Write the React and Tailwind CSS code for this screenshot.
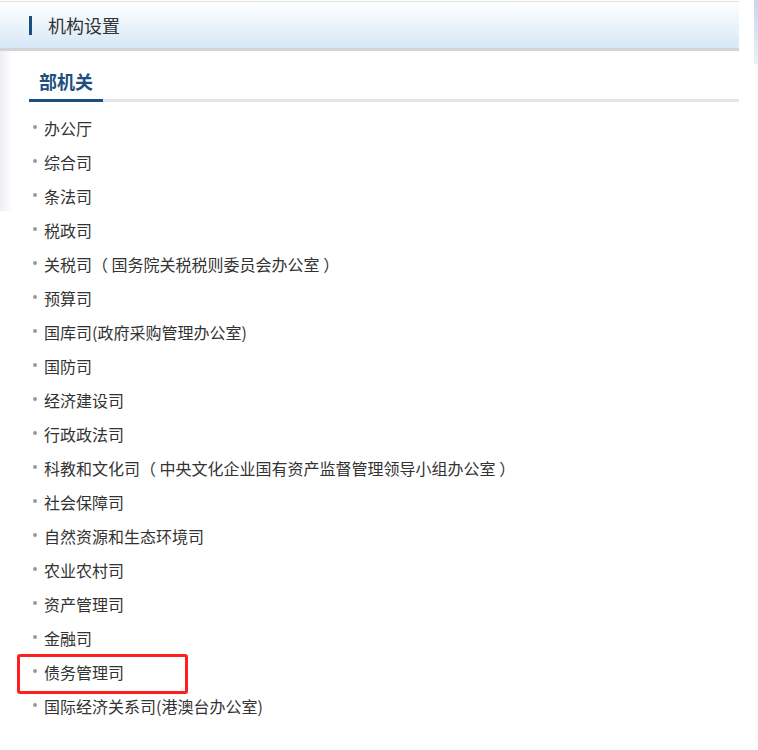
import React from "react";

const items = [
  "办公厅",
  "综合司",
  "条法司",
  "税政司",
  "关税司（ 国务院关税税则委员会办公室 ）",
  "预算司",
  "国库司(政府采购管理办公室)",
  "国防司",
  "经济建设司",
  "行政政法司",
  "科教和文化司（ 中央文化企业国有资产监督管理领导小组办公室 ）",
  "社会保障司",
  "自然资源和生态环境司",
  "农业农村司",
  "资产管理司",
  "金融司",
  "债务管理司",
  "国际经济关系司(港澳台办公室)",
];

export default function App() {
  return (
    <div className="relative w-[758px] h-[750px] bg-white overflow-hidden font-['Microsoft_YaHei','Noto_Sans_CJK_SC',sans-serif] text-[#333]">
      <div className="absolute left-0 top-[51px] w-[12px] h-[160px] bg-gradient-to-r from-[#eceff3] to-white" />
      <div className="absolute right-0 top-0 w-[4px] h-[64px] bg-gradient-to-b from-[#c9d7ec] to-[#eaf0f8]" />
      <div className="relative w-[739px] pt-[1px]">
        <div className="h-[50px] border-t border-[#e2e4e6] border-b-[3px] border-b-[#d3d4d6] bg-gradient-to-b from-white to-[#d7e8f6] flex items-center pl-[29px]">
          <div className="w-[3px] h-[19px] bg-[#1b4d80]" />
          <div className="ml-[16px] text-[18px] leading-[24px] text-[#333]">机构设置</div>
        </div>
        <div className="ml-[29px]">
          <div className="pt-[17px] pb-[5px] pl-[10px] text-[18px] leading-[26px] font-bold text-[#1e4f7e]">
            部机关
          </div>
          <div className="h-[3px] bg-[#e5e5e5]">
            <div className="w-[74px] h-[3px] bg-[#1b4f80]" />
          </div>
          <ul className="mt-[9px]">
            {items.map((t) => (
              <li key={t} className="flex items-center h-[34px] pl-[4px]">
                <span className="w-[4px] h-[4px] rounded-full bg-[#9a9a9a] -mt-[3px]" />
                <span className="ml-[7px] text-[16px] leading-[34px] text-[#333]">{t}</span>
              </li>
            ))}
          </ul>
        </div>
      </div>
      <div className="absolute left-[17px] top-[654px] w-[171px] h-[40px] border-[3px] border-[#ff1f1f] rounded-[3px]" />
    </div>
  );
}
